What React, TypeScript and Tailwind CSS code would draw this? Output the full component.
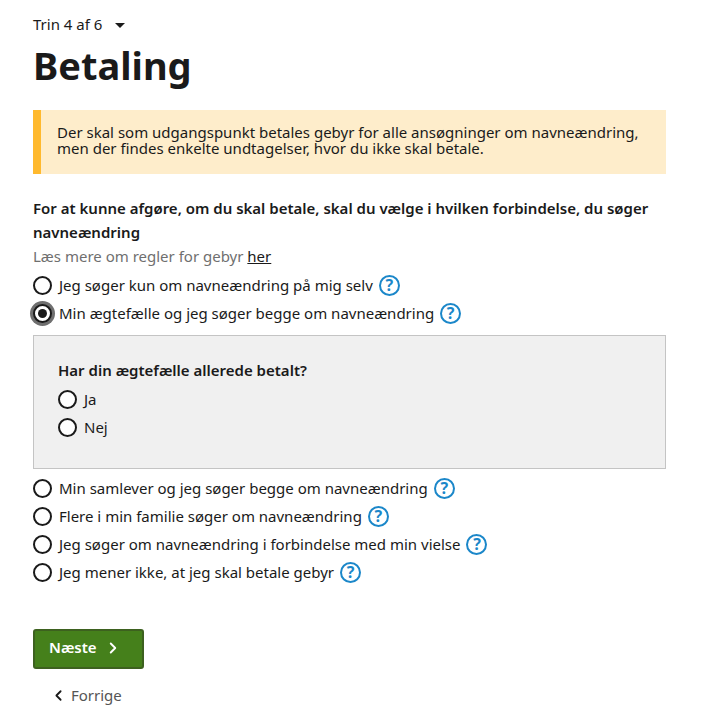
import React from 'react';
import { ChevronLeft, ChevronRight } from 'lucide-react';

const HelpIcon = () => (
  <span className="ml-[6px] inline-flex h-[21px] w-[21px] items-center justify-center rounded-full border-2 border-[#1b87c9] text-[16px] font-bold leading-none text-[#1b87c9]">
    ?
  </span>
);

const Radio = ({ label, checked, help = true }: { label: string; checked?: boolean; help?: boolean }) => (
  <div className="flex h-[28px] items-center">
    <span
      className={`mr-[7px] flex h-[19px] w-[19px] shrink-0 items-center justify-center rounded-full border-2 border-[#1a1a1a] bg-white ${checked ? 'shadow-[0_0_0_3px_#6f6f6f]' : ''}`}
    >
      {checked && <span className="h-[9px] w-[9px] rounded-full bg-[#1a1a1a]" />}
    </span>
    <span className="text-[15px] text-[#1a1a1a]">{label}</span>
    {help && <HelpIcon />}
  </div>
);

export default function App() {
  return (
    <div className="min-h-[723px] bg-white pl-[33px] pr-[46px] pt-[13px] font-['Noto_Sans',sans-serif] text-[#1a1a1a]">
      <div className="flex h-[22px] items-center text-[15px]">
        Trin 4 af 6
        <span className="ml-[13px] mt-[2px] h-0 w-0 border-x-[5px] border-t-[5px] border-x-transparent border-t-[#1a1a1a]" />
      </div>
      <h1 className="mt-[3px] text-[38px] font-bold leading-[54px]">Betaling</h1>
      <div className="mt-[18px] h-[64px] border-l-[8px] border-[#ffb92e] bg-[#feedcb] pl-[16px] pr-[16px] pt-[14px] text-[15px] leading-[16px]">
        Der skal som udgangspunkt betales gebyr for alle ansøgninger om navneændring, men der findes enkelte undtagelser, hvor du ikke skal betale.
      </div>
      <p className="mt-[22px] text-[15px] font-semibold leading-[24px]">
        For at kunne afgøre, om du skal betale, skal du vælge i hvilken forbindelse, du søger navneændring
      </p>
      <p className="text-[15px] leading-[24px] text-[#6f6f6f]">
        Læs mere om regler for gebyr <span className="text-[#1a1a1a] underline">her</span>
      </p>
      <div className="mt-[3px]">
        <Radio label="Jeg søger kun om navneændring på mig selv" />
        <Radio label="Min ægtefælle og jeg søger begge om navneændring" checked />
      </div>
      <div className="mb-[5px] mt-[8px] h-[134px] border border-[#c4c4c4] bg-[#f0f0f0] pl-[24px] pt-[22px]">
        <p className="text-[15px] font-semibold leading-[24px]">Har din ægtefælle allerede betalt?</p>
        <div className="mt-[3px]">
          <Radio label="Ja" help={false} />
          <Radio label="Nej" help={false} />
        </div>
      </div>
      <Radio label="Min samlever og jeg søger begge om navneændring" />
      <Radio label="Flere i min familie søger om navneændring" />
      <Radio label="Jeg søger om navneændring i forbindelse med min vielse" />
      <Radio label="Jeg mener ikke, at jeg skal betale gebyr" />
      <button className="mt-[43px] flex h-[40px] w-[111px] items-center rounded-[3px] border-2 border-[#3d611f] bg-[#45801b] pb-[3px] pl-[14px] text-[15px] font-semibold text-white">
        Næste
        <ChevronRight className="ml-[7px]" size={18} strokeWidth={2.5} />
      </button>
      <div className="ml-[17px] mt-[14px] flex h-[24px] items-center text-[15px] text-[#555]">
        <ChevronLeft className="mr-[4px] text-[#1a1a1a]" size={17} strokeWidth={2.5} />
        Forrige
      </div>
    </div>
  );
}
